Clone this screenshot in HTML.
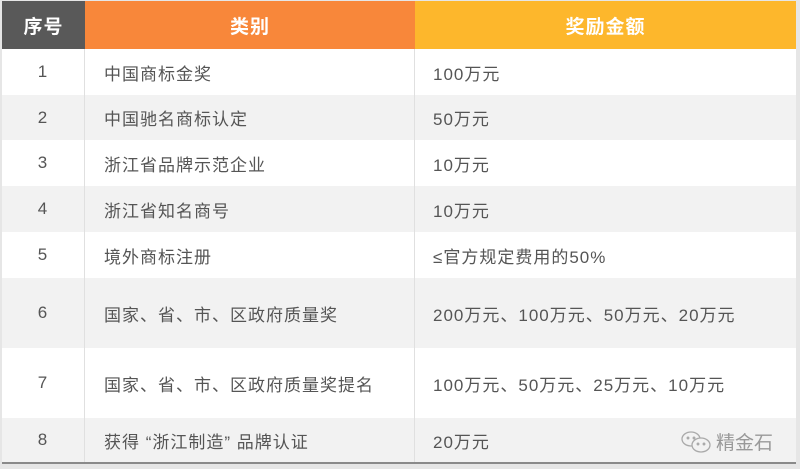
<!DOCTYPE html>
<html><head><meta charset="utf-8"><style>
html,body{margin:0;padding:0;width:800px;height:469px;background:#e6e6e6;overflow:hidden}
.t{position:absolute;left:2px;top:1px;width:794px;border-bottom:2px solid #8a8a8a;font-family:"Liberation Sans","Noto Sans CJK SC",sans-serif;color:#555;font-size:17px;letter-spacing:1px}
.r{display:flex;align-items:center}
.r>div{height:100%;display:flex;align-items:center;box-sizing:border-box}
.c1{width:83px;justify-content:center;border-right:1px solid #e0e0e0}
.c2{width:330px;padding-left:19px;border-right:1px solid #e0e0e0}
.c3{flex:1;padding-left:18px}
.h{height:48px;color:#fff;font-weight:bold;font-size:19px}
.h .c1{background:#595959;border:none}
.h .c2{background:#f8873a;justify-content:center;padding:0;border:none}
.h .c3{background:#fdb72c;justify-content:center;padding:0}
.w{background:#fff}.g{background:#f2f2f2}
.wm{position:absolute;left:680px;top:428px;font-family:"Liberation Sans","Noto Sans CJK SC",sans-serif;color:#999;font-size:19px;display:flex;align-items:center;gap:4px}
</style></head><body>
<div class="t">
<div class="r h"><div class="c1">序号</div><div class="c2">类别</div><div class="c3">奖励金额</div></div>
<div class="r w" style="height:46px"><div class="c1">1</div><div class="c2">中国商标金奖</div><div class="c3">100万元</div></div>
<div class="r g" style="height:45px"><div class="c1">2</div><div class="c2">中国驰名商标认定</div><div class="c3">50万元</div></div>
<div class="r w" style="height:46px"><div class="c1">3</div><div class="c2">浙江省品牌示范企业</div><div class="c3">10万元</div></div>
<div class="r g" style="height:46px"><div class="c1">4</div><div class="c2">浙江省知名商号</div><div class="c3">10万元</div></div>
<div class="r w" style="height:46px"><div class="c1">5</div><div class="c2">境外商标注册</div><div class="c3">≤官方规定费用的50%</div></div>
<div class="r g" style="height:70px"><div class="c1">6</div><div class="c2">国家、省、市、区政府质量奖</div><div class="c3">200万元、100万元、50万元、20万元</div></div>
<div class="r w" style="height:70px"><div class="c1">7</div><div class="c2">国家、省、市、区政府质量奖提名</div><div class="c3">100万元、50万元、25万元、10万元</div></div>
<div class="r g" style="height:44px"><div class="c1">8</div><div class="c2">获得 “浙江制造” 品牌认证</div><div class="c3">20万元</div></div>
</div>
<div class="wm"><svg width="32" height="24" viewBox="0 0 32 24" fill="none" stroke="#aaa" stroke-width="1.3"><ellipse cx="11" cy="9" rx="9" ry="7"/><ellipse cx="21" cy="15" rx="9" ry="7" fill="#f2f2f2"/><circle cx="8" cy="8" r=".8" fill="#aaa"/><circle cx="14" cy="8" r=".8" fill="#aaa"/><circle cx="18" cy="14" r=".8" fill="#aaa"/><circle cx="24" cy="14" r=".8" fill="#aaa"/></svg>精金石</div>
</body></html>
